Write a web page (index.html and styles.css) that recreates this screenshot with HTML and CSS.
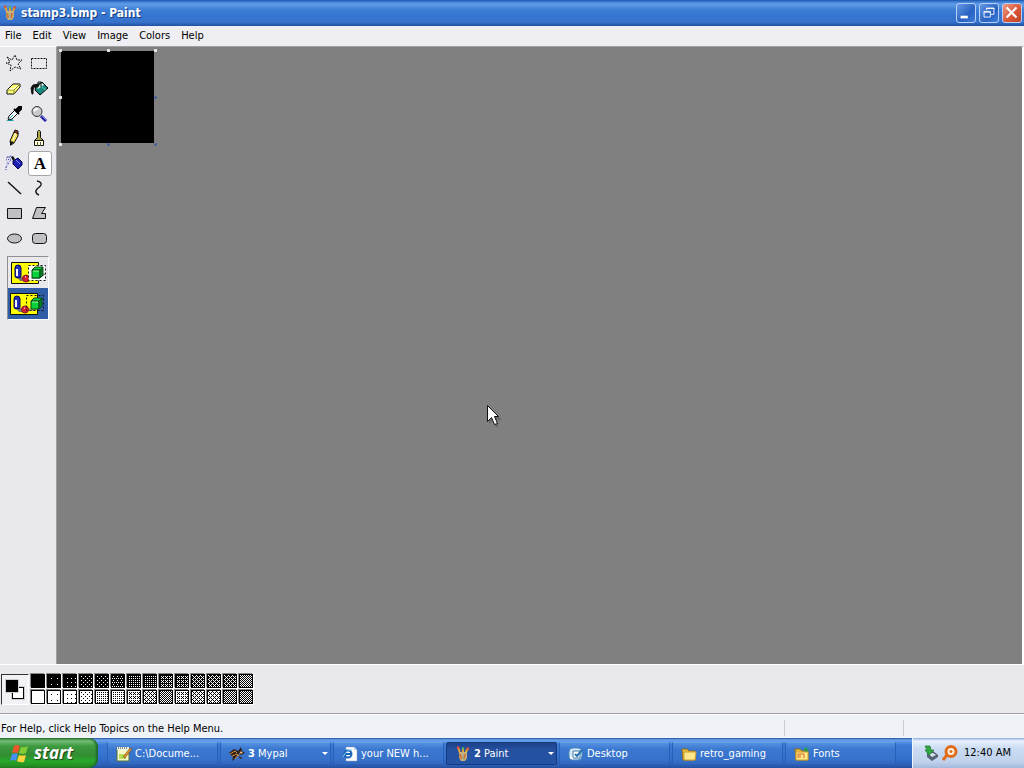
FILE: index.html
```html
<!DOCTYPE html>
<html lang="en">
<head>
<meta charset="utf-8">
<title>stamp3.bmp - Paint</title>
<link rel="stylesheet" href="styles.css">
</head>
<body>
<svg class="defs" aria-hidden="true">
  <defs>
    <g id="cup">
      <path d="M3 1l2 6M13 2l-3 6M8 3v5" stroke="#e8a030" stroke-width="2"/>
      <path d="M2 1l2 1M14 2l-2 1" stroke="#e04838" stroke-width="2"/>
      <path d="M7 2l2 1" stroke="#60b858" stroke-width="2"/>
      <path d="M4 6l8 0 0 6-2 3H6l-2-3z" fill="#c9b27a"/>
      <path d="M5 8l1 5M10 8l-1 5" stroke="#c87838" stroke-width="2"/>
      <path d="M8 8v6" stroke="#91a5ad"/>
    </g>
    <g id="shapes">
      <path d="M3.500 4.500h27v21h-27z" fill="#ff0" stroke="#111"/>
      <path d="M19 22h8l7-4v-2l-5 2-9 2z" fill="#777" opacity=".7"/>
      <path d="M9 19h8l3 2-3 2h-5z" fill="#777"/>
      <path d="M7 10q0-3 3-3t3 3v8q0 2-3 2t-3-2z" fill="#2230b8" stroke="#050560"/>
      <path d="M9 11v7" stroke="#fff" stroke-width="2"/>
      <circle cx="18" cy="20.500" r="3.500" fill="#d71f32" stroke="#861526"/>
      <path d="M17 19h1" stroke="#fff"/>
    </g>
    <g id="cube">
      <path d="M24 12l3-3h8l-3 3zM24 12h8v8h-8z" fill="#0bd23a" stroke="#064b16"/>
      <path d="M32 12l3-3v8l-3 3z" fill="#078326" stroke="#064b16"/>
      <path d="M25 13h6" stroke="#8fff9c"/>
    </g>
  </defs>
</svg>
<div class="window">
  <header class="titlebar">
    <svg class="icon" viewBox="0 0 16 16" fill="none"><use href="#cup"/></svg>
    <h1 class="title">stamp3.bmp - Paint</h1>
    <button class="caption" aria-label="Minimize"><svg viewBox="0 0 20 20"><path d="M4 13h8v3H4z" fill="#fff"/></svg></button>
    <button class="caption" aria-label="Restore"><svg viewBox="0 0 20 20" fill="none" stroke="#fff"><path d="M7.500 7V4.500h8v7H12M7 5h9M4.500 8.500h7v6h-7zM4 9h8"/></svg></button>
    <button class="caption caption-close" aria-label="Close"><svg viewBox="0 0 20 20"><path d="M4 4l11 11M15 4L4 15" stroke="#fff" stroke-width="2.400"/></svg></button>
  </header>
  <nav class="menubar">
    <button>File</button><button>Edit</button><button>View</button><button>Image</button><button>Colors</button><button>Help</button>
  </nav>
  <main class="workspace">
    <aside class="sidebar">
      <div class="tools">
        <button class="tool" aria-label="Free-Form Select"><svg viewBox="0 0 20 20" fill="none" stroke="#111" stroke-dasharray="2 1"><path d="M3 4l5 3 3-5 2 5h5l-4 4 3 5-6-2-5 4 1-6-5-2 4-1z"/></svg></button>
        <button class="tool" aria-label="Select"><svg viewBox="0 0 20 20" fill="none" stroke="#111" stroke-dasharray="2 1"><path d="M2.500 5.500h15v10h-15z"/></svg></button>
        <button class="tool" aria-label="Eraser"><svg viewBox="0 0 20 20"><path d="M3 12l6-6h7v3l-6 7H3z" fill="#ffff78" stroke="#111"/><path d="M3 12h7l6-6M10 12v4" fill="none" stroke="#8a8a20"/><path d="M5 11h5l4-4" stroke="#fff" fill="none"/></svg></button>
        <button class="tool" aria-label="Fill With Color"><svg viewBox="0 0 20 20"><path d="M7 8l6-4 6 6-8 7-5-5z" fill="#18877f" stroke="#000"/><path d="M8 9l5-4 2 2-6 4z" fill="#d2f0df"/><path d="M13 9l4 3" stroke="#5ed9b1"/><path d="M10 6L9 9 5 9 4 12 4 16 3 16 2 10 4 7z" fill="#111" stroke="#111"/><path d="M9 8V4h3v5" fill="none" stroke="#111"/></svg></button>
        <button class="tool" aria-label="Pick Color"><svg viewBox="0 0 20 20"><path d="M2 18h8l-3-3z" fill="#13a5a5"/><path d="M4 16l1-3 7-7 3 3-7 7-3 1z" fill="#fff" stroke="#111"/><path d="M10 6l5 5M12 7l3-3h2v2l-3 3z" fill="#000" stroke="#000" stroke-width="2"/><path d="M5 16l4-4" stroke="#13a5a5"/></svg></button>
        <button class="tool" aria-label="Magnifier"><svg viewBox="0 0 20 20"><path d="M12 13l5 5" stroke="#2020a0" stroke-width="3"/><path d="M12 12l5 5" stroke="#8888e0"/><circle cx="8" cy="8.500" r="5" fill="#c9c9cc" stroke="#333"/><path d="M5 8l2-2h2" fill="none" stroke="#fff" stroke-width="2"/></svg></button>
        <button class="tool" aria-label="Pencil"><svg viewBox="0 0 20 20"><path d="M7 17l-1-4 4-9 4 1v3l-4 7z" fill="#f2dc49" stroke="#111"/><path d="M10 4l4 2v-3l-3-1z" fill="#aa382c" stroke="#111"/><path d="M6 13l4 1-4 4z" fill="#111"/><path d="M9 12l3-7" stroke="#fff"/></svg></button>
        <button class="tool" aria-label="Brush"><svg viewBox="0 0 20 20"><path d="M8.500 9.500v-6l1-1h1l1 1v6l3 3h-9z" fill="#aaa646" stroke="#111"/><path d="M5.500 12.500h9v5h-9z" fill="#ffffd0" stroke="#111"/><path d="M8.500 14v4M11.500 14v4" stroke="#555"/></svg></button>
        <button class="tool" aria-label="Airbrush"><svg viewBox="0 0 20 20"><path d="M9 8l5-3 4 4v3l-4 4-5-5z" fill="#2020b0" stroke="#000055"/><path d="M11 6l-2-3-2 1 2 4z" fill="#111"/><path d="M12 7l4 4" stroke="#8b8bff"/><path d="M8 4H3M7 6L2 7M7 7l-5 4M5 10l-3 4M7 3L2 5M2 14v3" stroke="#3939bd" stroke-dasharray="1 1"/></svg></button>
        <button class="tool tool-active" aria-label="Text" aria-pressed="true">A</button>
        <button class="tool" aria-label="Line"><svg viewBox="0 0 20 20"><path d="M4 4l13 12" stroke="#111" stroke-width="1.400"/></svg></button>
        <button class="tool" aria-label="Curve"><svg viewBox="0 0 20 20"><path d="M8 3q5 1 4 4-1 2-4 4-3 4 2 6" stroke="#111" stroke-width="1.400" fill="none"/></svg></button>
        <button class="tool" aria-label="Rectangle"><svg viewBox="0 0 20 20"><path d="M3.500 5.500h14v10h-14z" fill="#c0c0c4" stroke="#111"/></svg></button>
        <button class="tool" aria-label="Polygon"><svg viewBox="0 0 20 20"><path d="M7.500 4.500h9l-4 6h4v5h-13z" fill="#c0c0c4" stroke="#111"/></svg></button>
        <button class="tool" aria-label="Ellipse"><svg viewBox="0 0 20 20"><ellipse cx="10.500" cy="10.500" rx="7" ry="4.500" fill="#c0c0c4" stroke="#111"/></svg></button>
        <button class="tool" aria-label="Rounded Rectangle"><svg viewBox="0 0 20 20"><rect x="3.500" y="5.500" width="14" height="10" rx="3" fill="#c0c0c4" stroke="#111"/></svg></button>
      </div>
      <div class="modes">
        <button class="mode" aria-label="Opaque background"><svg viewBox="0 0 40 30"><use href="#shapes"/><path d="M20.500 7.500h17v15h-17z" fill="#fff" stroke="#111" stroke-dasharray="2 2"/><path d="M22 21h9l6-4v-2l-6 3z" fill="#999"/><use href="#cube"/></svg></button>
        <button class="mode mode-active" aria-label="Transparent background" aria-pressed="true"><svg viewBox="1 0 40 30"><use href="#shapes"/><path d="M19.500 6.500h17v15h-17z" fill="none" stroke="#111" stroke-dasharray="2 2"/><use href="#cube"/></svg></button>
      </div>
    </aside>
    <section class="canvas-area" aria-label="Canvas">
      <div class="drawing">
        <i class="handle nw"></i><i class="handle n"></i><i class="handle ne"></i><i class="handle w"></i><i class="handle e blue"></i><i class="handle sw"></i><i class="handle s blue"></i><i class="handle se blue"></i>
      </div>
      <svg class="pointer" viewBox="0 0 16 24"><path d="M1 1v17l4-4 3 7h3l-3-7h6z" fill="#222" opacity=".25" transform="translate(1 1)"/><path d="M.5.5v16l4-4 3 7 3-1-3-7h4z" fill="#fff" stroke="#111"/></svg>
    </section>
  </main>
  <section class="palette" aria-label="Color box">
    <div class="current"><span class="back-color"></span><span class="front-color"></span></div>
    <div class="swatches">
      <button class="swatch dark" aria-label="Black"></button><button class="swatch dark d5" aria-label="Dark 2"></button><button class="swatch dark d4" aria-label="Dark 3"></button><button class="swatch dark s4" aria-label="Dark 4"></button><button class="swatch dark s4" aria-label="Dark 5"></button><button class="swatch dark s3" aria-label="Dark 6"></button><button class="swatch dark d2" aria-label="Dark 7"></button><button class="swatch dark d2" aria-label="Dark 8"></button><button class="swatch dark m3" aria-label="Dark 9"></button><button class="swatch dark m3" aria-label="Dark 10"></button><button class="swatch dark m4" aria-label="Dark 11"></button><button class="swatch dark m4" aria-label="Dark 12"></button><button class="swatch dark m4" aria-label="Dark 13"></button><button class="swatch dark s2" aria-label="Dark 14"></button>
      <button class="swatch light" aria-label="White"></button><button class="swatch light d5" aria-label="Light 2"></button><button class="swatch light d4" aria-label="Light 3"></button><button class="swatch light s4" aria-label="Light 4"></button><button class="swatch light d2" aria-label="Light 5"></button><button class="swatch light d2" aria-label="Light 6"></button><button class="swatch light m3" aria-label="Light 7"></button><button class="swatch light m4" aria-label="Light 8"></button><button class="swatch light s2" aria-label="Light 9"></button><button class="swatch light m3" aria-label="Light 10"></button><button class="swatch light m4" aria-label="Light 11"></button><button class="swatch light m4" aria-label="Light 12"></button><button class="swatch light s2" aria-label="Light 13"></button><button class="swatch light s2" aria-label="Light 14"></button>
    </div>
  </section>
  <footer class="statusbar">
    <span class="status-help">For Help, click Help Topics on the Help Menu.</span><span class="status-cell"></span><span class="status-cell"></span>
  </footer>
</div>
<nav class="taskbar">
  <button class="start"><svg viewBox="0 0 20 20"><path d="M4 3q3-2 6 0l-2 7q-3-1-6 0z" fill="#ec572c"/><path d="M11 4q3 1 7-1l-2 7q-4 2-7 0z" fill="#82cc36"/><path d="M2 11q3-1 6 0l-2 7q-3-2-6 0z" fill="#4790ef"/><path d="M9 12q3 1 7 0l-2 7q-4 1-7-1z" fill="#ffd33a"/></svg><span>start</span></button>
  <div class="tasks">
    <button class="task"><svg viewBox="0 0 16 16"><path d="M1 2h12v13H1z" fill="#f7f7c7" stroke="#507040"/><path d="M1 1h12v3H1z" fill="#e9f1e0"/><path d="M2 2h10" stroke="#333" stroke-dasharray="1 1"/><path d="M3 8h7v5H3z" fill="#b4df54"/><path d="M7 11l7-9 2 1-7 9z" fill="#e78e2c" stroke="#59471b" stroke-width=".5"/></svg><span>C:\Docume...</span></button>
    <button class="task"><svg viewBox="0 0 16 16"><path d="M0 7l5-4 4 2 3-4 1 4 3 2-4 2-3-1-2 4-4 3 1-4z" fill="#302218"/><path d="M1 8l5-3 2 2M3 10l5-2 2 2M6 13l3-4" fill="none" stroke="#d48a3b"/><path d="M12 5l2 2-4 1z" fill="#efc080"/><path d="M9 10l5 2-3 1z" fill="#402a1b"/></svg><span><b>3</b> Mypal</span><i class="arrow"></i></button>
    <button class="task"><svg viewBox="0 0 16 16"><path d="M4 1h8l3 3v11H4z" fill="#fff" stroke="#8b9bbc" stroke-width=".5"/><path d="M12 1v3h3" fill="#ccd6e9"/><circle cx="6" cy="8" r="3.500" fill="none" stroke="#1c66ba" stroke-width="2"/><path d="M3 8h7" stroke="#1c66ba" stroke-width="2"/><path d="M1 11Q5 3 10 4" stroke="#77c8e5" fill="none"/></svg><span>your NEW h...</span></button>
    <button class="task task-active"><svg viewBox="0 0 16 16" fill="none"><use href="#cup"/></svg><span><b>2</b> Paint</span><i class="arrow"></i></button>
    <button class="task"><svg viewBox="0 0 16 16"><rect x="1" y="2" width="13" height="12" rx="4" fill="#d8eafb" stroke="#4d8ab8"/><path d="M5 5h7v7H5z" fill="#fff" stroke="#3a7bad"/><path d="M7 8l2 2 5-6" stroke="#2674ae" stroke-width="2" fill="none"/><path d="M2 11l3 2" stroke="#fff" stroke-width="2"/></svg><span>Desktop</span></button>
    <button class="task"><svg viewBox="0 0 16 16"><path d="M1 3h5l2 2h6v9H2z" fill="#e8b843" stroke="#94701b"/><path d="M3 6h12l-1 8H3z" fill="#ffe88b" stroke="#d0a12e"/></svg><span>retro_gaming</span></button>
    <button class="task"><svg viewBox="0 0 16 16"><path d="M1 3h5l2 2h6v9H2z" fill="#e8b843" stroke="#94701b"/><path d="M2 6h12v8H2z" fill="#ffe88b" stroke="#d0a12e"/><path d="M4 12V8h6v4M6 9v3" stroke="#d96625" fill="none"/><path d="M9 4l3-3 3 3-3 2z" fill="#2b9a55"/></svg><span>Fonts</span></button>
  </div>
  <div class="tray">
    <svg viewBox="0 0 16 16"><path d="M4 8l6-2 5 4v2l-6 4-5-4z" fill="#536373"/><path d="M6 9l4-1 3 2-4 2z" fill="#d8e0e8"/><path d="M2 1h5l1 4 3 0-5 5-4-5h2z" fill="#2fa83e" stroke="#207a2c" stroke-width=".7"/></svg>
    <svg viewBox="0 0 16 16"><circle cx="9" cy="6.500" r="5" fill="#fff0da" stroke="#de6c1c" stroke-width="3"/><circle cx="9" cy="6.500" r="1.500" fill="#de6c1c"/><path d="M5 10l-4 5" stroke="#de6c1c" stroke-width="3"/></svg>
    <time datetime="00:40">12:40 AM</time>
  </div>
</nav>
</body>
</html>
```
FILE: styles.css
```css
* { box-sizing: border-box; }

body {
  margin: 0;
  height: 100vh;
  display: flex;
  flex-direction: column;
  overflow: hidden;
  background: #e9e8ed;
  color: #000;
  font: 11px/14px "DejaVu Sans Condensed", "Noto Sans", sans-serif;
}

button {
  margin: 0;
  padding: 0;
  border: 0;
  background: none;
  color: inherit;
  font: inherit;
}

svg { display: block; flex: none; }
.defs { position: absolute; width: 0; height: 0; }
.window { flex: 1; min-height: 0; display: flex; flex-direction: column; }

.titlebar {
  flex: none;
  height: 26px;
  display: flex;
  align-items: center;
  gap: 3px;
  padding: 0 2px;
  background: linear-gradient(#1d55a8 0, #3f82da 2px, #609de8 4px, #3c7dd5 10px, #3474cf 16px, #3773cd 22px, #2350a2 26px);
  color: #fff;
}
.icon { width: 16px; height: 16px; }
.title {
  flex: 1;
  margin: 0;
  font: bold 12px/16px "DejaVu Sans Condensed", sans-serif;
  text-shadow: 1px 1px #173d80;
}
.caption {
  width: 20px;
  height: 20px;
  border: 1px solid #b5cff7;
  border-radius: 3px;
  background: linear-gradient(135deg, #6699e6, #2861c2 60%, #3c7edb);
}
.caption svg { width: 18px; height: 18px; }
.caption-close { background: linear-gradient(135deg, #ec9a85, #d85433 60%, #bd432b); }

.menubar {
  flex: none;
  height: 20px;
  display: flex;
  align-items: center;
  gap: 11px;
  padding: 0 5px 1px;
  background: #efeef2;
}

.workspace { flex: 1; min-height: 0; display: flex; }
.sidebar {
  width: 57px;
  padding: 4px 0 0 2px;
  border-top: 1px solid #fff;
  border-right: 1px solid #a0a0a4;
}
.tools { display: grid; grid-template-columns: 25px 25px; grid-auto-rows: 25px; }
.tool { display: grid; place-items: center; padding: 0 2px 2px 0; }
.tool svg { width: 20px; height: 20px; }
.tool-active {
  margin-left: 1px;
  padding: 0;
  border: 1px solid #a6a5aa;
  border-radius: 3px;
  background: #fff;
  font: bold 17px/20px "Liberation Serif", serif;
}
.modes {
  width: 42px;
  margin: 5px 0 0 5px;
  border: 1px solid #fff;
  border-top-color: #909094;
  border-left-color: #909094;
}
.mode { display: block; width: 40px; height: 31px; }
.mode svg { width: 40px; height: 30px; }
.mode-active { background: #315da6; }

.canvas-area {
  position: relative;
  flex: 1;
  padding: 4px 3px;
  border-top: 1px solid #a0a0a4;
  border-right: 2px solid #fff;
  background: #808080;
}
.drawing { position: relative; width: 93px; height: 92px; margin-left: 1px; background: #000; }
.handle { position: absolute; width: 3px; height: 3px; background: #fff; border: 1px solid #ddd; }
.handle.blue { background: #344b91; border-color: #596c9e; }
.nw, .n, .ne { top: -2px; }
.sw, .s, .se { bottom: -3px; }
.nw, .w, .sw { left: -2px; }
.ne, .e, .se { right: -3px; }
.n, .s { left: 46px; }
.w, .e { top: 45px; }
.pointer { position: absolute; left: 430px; top: 358px; width: 16px; height: 24px; }

.palette {
  flex: none;
  height: 50px;
  display: flex;
  gap: 2px;
  padding: 9px 1px;
  border-top: 1px solid #fff;
  border-bottom: 1px solid #a0a0a4;
}
.current {
  position: relative;
  width: 28px;
  height: 31px;
  border: 1px solid #fff;
  border-top-color: #333;
  border-left-color: #333;
  background: #f2f1f5;
}
.front-color, .back-color { position: absolute; width: 12px; height: 12px; border: 1px solid #000; box-shadow: 0 0 0 1px #ccc; }
.front-color { left: 4px; top: 5px; background: #000; }
.back-color { left: 10px; top: 12px; background: #fff; }
.swatches { display: grid; grid-template-columns: repeat(14, 14px); grid-auto-rows: 14px; gap: 2px; }
.swatch {
  --dot: conic-gradient(from 270deg at 1px 1px, var(--ink) 90deg, transparent 0);
  border: 1px solid #000;
  box-shadow: -1px -1px #888, 1px 1px #fff;
}
.dark { --ink: #fff; background-color: #000; }
.light { --ink: #000; background-color: #fff; }
.d5 { background-image: var(--dot); background-size: 6px 6px; background-position: 3px 3px; }
.d4 { background-image: var(--dot); background-size: 4px 4px; background-position: 3px 3px; }
.d2 { background-image: var(--dot); background-size: 2px 2px; background-position: 1px 1px; }
.s4 { background-image: var(--dot), var(--dot); background-size: 4px 4px; background-position: 1px 1px, 3px 3px; }
.s3 { background-image: var(--dot), var(--dot); background-size: 4px 4px, 2px 4px; background-position: 1px 1px, 0 3px; }
.s2 { background-image: var(--dot), var(--dot); background-size: 2px 2px; background-position: 0 0, 1px 1px; }
.m3 { background-image: var(--dot), var(--dot); background-size: 2px 2px, 4px 4px; background-position: 1px 1px, 2px 2px; }
.m4 { background-image: var(--dot), var(--dot), var(--dot); background-size: 2px 2px, 4px 4px, 4px 4px; background-position: 1px 1px, 0 0, 2px 2px; }

.statusbar {
  flex: none;
  height: 24px;
  display: flex;
  padding: 5px 2px 2px 1px;
  border-top: 1px solid #fff;
  background: #eff2f7;
}
.status-help { flex: 1; line-height: 17px; }
.status-cell { width: 119px; border-left: 1px solid #c9cad2; }

.taskbar {
  flex: none;
  height: 30px;
  display: flex;
  background: linear-gradient(#24529f 0, #6da5ed 2px, #3a7bd6 7px, #3370cb 20px, #2b60b8 27px, #234f9c 30px);
  color: #fff;
}
.start {
  width: 98px;
  display: flex;
  align-items: center;
  gap: 4px;
  padding-left: 10px;
  border-radius: 0 9px 9px 0;
  background: linear-gradient(#28752b 0, #76bd77 3px, #3e9a40 8px, #318c32 17px, #29a82c 23px, #22851f 30px);
  box-shadow: inset -2px 0 2px #20682d;
  font: italic bold 17px/20px "Open Sans", "Noto Sans", sans-serif;
  text-shadow: 1px 1px 1px #174417;
}
.start svg { width: 20px; height: 20px; }
.tasks { flex: 1; min-width: 0; display: flex; gap: 2px; padding: 4px 15px 3px 9px; }
.task {
  flex: 0 1 111px;
  min-width: 0;
  display: flex;
  align-items: center;
  gap: 3px;
  padding: 0 2px 0 8px;
  border: 1px solid #285fb7;
  border-top-color: #69a1e8;
  border-radius: 2px;
  background: linear-gradient(#5591e2, #3b78d0 6px, #3772cb 16px, #3268be);
  text-align: left;
  white-space: nowrap;
}
.task span { flex: 1; }
.task svg, .tray svg { width: 16px; height: 16px; }
.task-active { border-color: #16387d; background: linear-gradient(#1b4189, #24509f 6px, #2554a5); }
.arrow { border: 3px solid transparent; border-top-color: #fff; border-bottom: 0; }
.tray {
  flex: none;
  min-width: 111px;
  display: flex;
  align-items: center;
  gap: 3px;
  padding: 0 13px 0 10px;
  border-left: 1px solid #edf5ff;
  background: linear-gradient(#8fafdc 0, #e9f1fd 3px, #cbdcf3 10px, #bfd1ec 24px, #a3badb 30px);
  color: #000;
}
.tray time { margin-left: 3px; white-space: nowrap; }
```
